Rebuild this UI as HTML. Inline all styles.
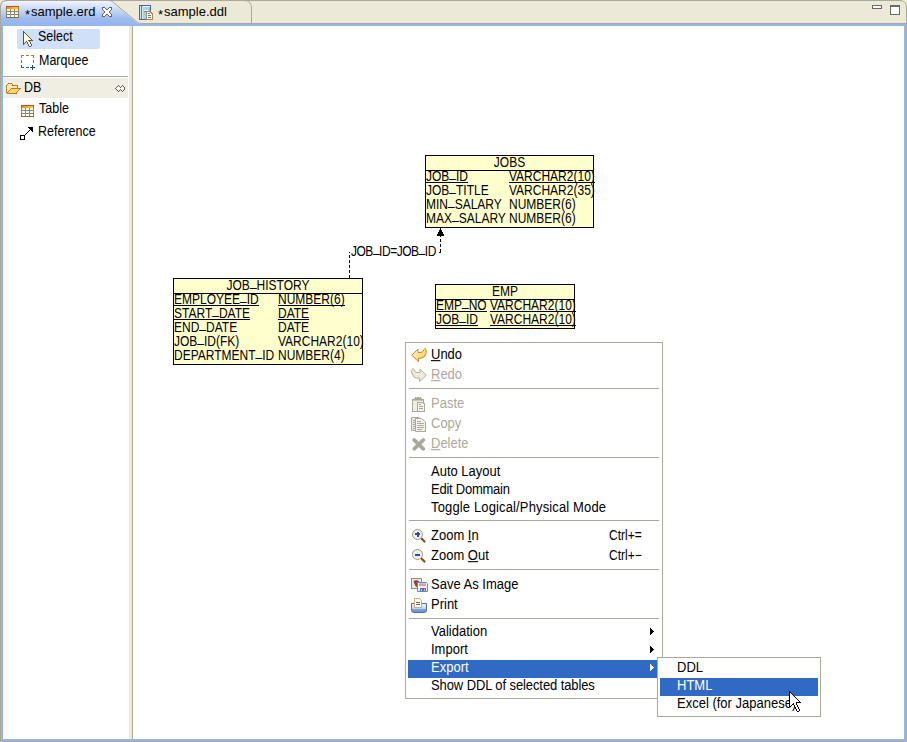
<!DOCTYPE html>
<html><head><meta charset="utf-8">
<style>
*{margin:0;padding:0;box-sizing:border-box}
html,body{width:907px;height:742px;overflow:hidden;background:#ECE9D8;font-family:"Liberation Sans",sans-serif;color:#000}
.a{position:absolute}
.t{position:absolute;white-space:pre;line-height:1;font-family:"Liberation Sans",sans-serif}
.f13{font-size:13px}
.f12{font-size:12px}
.tb{font-size:13px;letter-spacing:-0.62px}
svg{position:absolute;shape-rendering:crispEdges;overflow:visible}
.gray{color:#ACA899}
.u{text-decoration:underline}
.us{position:relative;top:-3px}
.sy13{transform:scaleY(1.1);transform-origin:0 11px}
.sy12i{display:inline-block;transform:scaleY(1.2);transform-origin:0 10px}
.ul::after{content:"";position:absolute;left:0;right:0;top:11px;height:1px;background:#000}
.sy125{transform:scaleY(1.15);transform-origin:0 10.5px}
</style></head><body>
<!-- outer frame -->
<div class="a" style="left:0;top:0;width:907px;height:742px;border:1px solid #ACA899;border-top-right-radius:7px;border-top-left-radius:7px;background:#ECE9D8"></div>
<!-- blue frame -->
<div class="a" style="left:1px;top:24px;width:905px;height:717px;border:2px solid #92B4EF;background:#FFFFFF"></div>
<!-- tab gray bottom line -->
<div class="a" style="left:142px;top:23px;width:764px;height:1px;background:#ACA899"></div>

<!-- active tab -->
<svg style="left:0;top:0" width="160" height="26">
  <defs><linearGradient id="tg" x1="0" y1="0" x2="0" y2="1">
    <stop offset="0" stop-color="#F2F6FD"/><stop offset="0.12" stop-color="#E2EBFA"/><stop offset="0.72" stop-color="#9DBBEE"/><stop offset="1" stop-color="#92B4EF"/></linearGradient></defs>
  <path shape-rendering="geometricPrecision" d="M1 26 L1 7 Q1 1 7 1 L107 1 C111 1 112 1.5 114 3.5 L135.5 21.5 C137.5 23.5 139 24 144 24 L144 26 Z" fill="url(#tg)"/>
  <path shape-rendering="geometricPrecision" d="M0.5 24 L0.5 7 Q0.5 0.5 7 0.5" fill="none" stroke="#ACA899" stroke-width="1"/>
  <path shape-rendering="geometricPrecision" d="M107 0.5 C111 0.5 112 1 114 3 L136 21 C138 23 139 23.5 143 23.5" fill="none" stroke="#ACA899" stroke-width="1"/>
</svg>
<!-- second tab right edge -->
<svg style="left:0;top:0" width="260" height="26">
  <path shape-rendering="geometricPrecision" d="M245 0.5 Q251.5 1 251.5 8 L251.5 23" fill="none" stroke="#ACA899" stroke-width="1"/>
</svg>

<!-- tab table icon -->
<svg style="left:6px;top:6px" width="13" height="12" viewBox="0 0 13 12">
  <defs><linearGradient id="tb1" x1="0" y1="0" x2="0" y2="1"><stop offset="0" stop-color="#B0501A"/><stop offset="0.3" stop-color="#A08040"/><stop offset="0.6" stop-color="#8A8A70"/><stop offset="1" stop-color="#7A6A30"/></linearGradient>
  <linearGradient id="th1" x1="0" y1="0" x2="1" y2="0"><stop offset="0" stop-color="#F08A10"/><stop offset="1" stop-color="#FAD030"/></linearGradient></defs>
  <rect x="0" y="0" width="13" height="12" fill="url(#tb1)"/>
  <rect x="1" y="1" width="11" height="2" fill="url(#th1)"/>
  <rect x="4" y="8" width="1" height="3" fill="#8A92A0"/><rect x="8" y="8" width="1" height="3" fill="#8A92A0"/>
  <rect x="1" y="3" width="3" height="2" fill="#E4F6FC"/><rect x="5" y="3" width="3" height="2" fill="#E4F6FC"/><rect x="9" y="3" width="3" height="2" fill="#E4F6FC"/>
  <rect x="1" y="6" width="3" height="2" fill="#F4FAFD"/><rect x="5" y="6" width="3" height="2" fill="#F4FAFD"/><rect x="9" y="6" width="3" height="2" fill="#F4FAFD"/>
  <rect x="1" y="9" width="3" height="2" fill="#FFFFFF"/><rect x="5" y="9" width="3" height="2" fill="#FFFFFF"/><rect x="9" y="9" width="3" height="2" fill="#FFFFFF"/>
</svg>
<div class="t f13" style="left:25px;top:5px"><span style="position:relative;top:3px;margin-right:1px">*</span>sample.erd</div>
<!-- close X -->
<svg style="left:102px;top:7px" width="10" height="10" viewBox="0 0 10 10"><rect x="0" y="0" width="3" height="1" fill="#6A6452"/><rect x="7" y="0" width="3" height="1" fill="#6A6452"/><rect x="0" y="1" width="1" height="1" fill="#6A6452"/><rect x="1" y="1" width="2" height="1" fill="#FFFFFF"/><rect x="3" y="1" width="1" height="1" fill="#6A6452"/><rect x="6" y="1" width="1" height="1" fill="#6A6452"/><rect x="7" y="1" width="2" height="1" fill="#FFFFFF"/><rect x="9" y="1" width="1" height="1" fill="#6A6452"/><rect x="0" y="2" width="1" height="1" fill="#6A6452"/><rect x="1" y="2" width="3" height="1" fill="#FFFFFF"/><rect x="4" y="2" width="2" height="1" fill="#6A6452"/><rect x="6" y="2" width="3" height="1" fill="#FFFFFF"/><rect x="9" y="2" width="1" height="1" fill="#6A6452"/><rect x="1" y="3" width="1" height="1" fill="#6A6452"/><rect x="2" y="3" width="6" height="1" fill="#FFFFFF"/><rect x="8" y="3" width="1" height="1" fill="#6A6452"/><rect x="2" y="4" width="1" height="1" fill="#6A6452"/><rect x="3" y="4" width="4" height="1" fill="#FFFFFF"/><rect x="7" y="4" width="1" height="1" fill="#6A6452"/><rect x="2" y="5" width="1" height="1" fill="#6A6452"/><rect x="3" y="5" width="4" height="1" fill="#FFFFFF"/><rect x="7" y="5" width="1" height="1" fill="#6A6452"/><rect x="1" y="6" width="1" height="1" fill="#6A6452"/><rect x="2" y="6" width="6" height="1" fill="#FFFFFF"/><rect x="8" y="6" width="1" height="1" fill="#6A6452"/><rect x="0" y="7" width="1" height="1" fill="#6A6452"/><rect x="1" y="7" width="3" height="1" fill="#FFFFFF"/><rect x="4" y="7" width="2" height="1" fill="#6A6452"/><rect x="6" y="7" width="3" height="1" fill="#FFFFFF"/><rect x="9" y="7" width="1" height="1" fill="#6A6452"/><rect x="0" y="8" width="1" height="1" fill="#6A6452"/><rect x="1" y="8" width="2" height="1" fill="#FFFFFF"/><rect x="3" y="8" width="1" height="1" fill="#6A6452"/><rect x="6" y="8" width="1" height="1" fill="#6A6452"/><rect x="7" y="8" width="2" height="1" fill="#FFFFFF"/><rect x="9" y="8" width="1" height="1" fill="#6A6452"/><rect x="0" y="9" width="3" height="1" fill="#6A6452"/><rect x="7" y="9" width="3" height="1" fill="#6A6452"/></svg>
<!-- ddl icon -->
<svg style="left:139px;top:5px" width="15" height="15" viewBox="0 0 15 15">
  <rect x="0" y="0" width="12" height="15" rx="1" fill="#3A64B0"/>
  <rect x="1" y="1" width="10" height="13" fill="#A8CFF4"/>
  <rect x="1" y="1" width="1" height="13" fill="#CFE8FA"/>
  <rect x="2" y="1" width="1" height="13" fill="#4C7CC0"/>
  <rect x="3" y="2" width="1" height="12" fill="#D8F0D8"/>
  <rect x="4" y="1" width="7" height="1" fill="#FFFFFF"/>
  <rect x="10" y="2" width="1" height="12" fill="#80C8D8"/>
  <rect x="5" y="5" width="4" height="1" fill="#FFFFFF"/>
  <rect x="5" y="6" width="3" height="1" fill="#3C88C0"/>
  <path d="M7 6 H11 L14 9 V15 H7 Z" fill="#A88A40"/>
  <path d="M8 7 H10.5 L13 9.5 V14 H8 Z" fill="#F6F8FC"/>
  <rect x="9" y="8" width="2" height="1" fill="#5A78B8"/><rect x="9" y="10" width="3" height="1" fill="#5A78B8"/><rect x="9" y="12" width="3" height="1" fill="#5A78B8"/>
</svg>
<div class="t f13" style="left:158px;top:5px"><span style="position:relative;top:3px;margin-right:1px">*</span>sample.ddl</div>

<!-- min / max -->
<svg style="left:872px;top:5px" width="30" height="12" viewBox="0 0 30 12">
  <rect x="0.5" y="0.5" width="9" height="3" fill="#FFFFFF" stroke="#6F6A5E"/>
  <rect x="18.5" y="0.5" width="9" height="9" fill="#FFFFFF" stroke="#6F6A5E"/>
  <rect x="18" y="1" width="10" height="1" fill="#6F6A5E"/>
</svg>

<!-- palette / canvas separator -->
<div class="a" style="left:129px;top:26px;width:3px;height:713px;background:#ECE9D8"></div>
<div class="a" style="left:132px;top:26px;width:1px;height:713px;background:#ACA899"></div>


<!-- palette -->
<div class="a" style="left:17px;top:29px;width:83px;height:20px;background:#CFE0F8;border-radius:2px"></div>
<svg style="left:23px;top:31px" width="10" height="16" viewBox="0 0 10 16"><rect x="0" y="0" width="1" height="1" fill="#57524A"/><rect x="0" y="1" width="2" height="1" fill="#57524A"/><rect x="0" y="2" width="1" height="1" fill="#57524A"/><rect x="1" y="2" width="1" height="1" fill="#FFFCD8"/><rect x="2" y="2" width="1" height="1" fill="#57524A"/><rect x="0" y="3" width="1" height="1" fill="#57524A"/><rect x="1" y="3" width="2" height="1" fill="#FFFCD8"/><rect x="3" y="3" width="1" height="1" fill="#57524A"/><rect x="0" y="4" width="1" height="1" fill="#57524A"/><rect x="1" y="4" width="3" height="1" fill="#FFFCD8"/><rect x="4" y="4" width="1" height="1" fill="#57524A"/><rect x="0" y="5" width="1" height="1" fill="#57524A"/><rect x="1" y="5" width="4" height="1" fill="#FFFCD8"/><rect x="5" y="5" width="1" height="1" fill="#57524A"/><rect x="0" y="6" width="1" height="1" fill="#57524A"/><rect x="1" y="6" width="5" height="1" fill="#FFFCD8"/><rect x="6" y="6" width="1" height="1" fill="#57524A"/><rect x="0" y="7" width="1" height="1" fill="#57524A"/><rect x="1" y="7" width="6" height="1" fill="#FFFCD8"/><rect x="7" y="7" width="1" height="1" fill="#57524A"/><rect x="0" y="8" width="1" height="1" fill="#57524A"/><rect x="1" y="8" width="7" height="1" fill="#FFFCD8"/><rect x="8" y="8" width="1" height="1" fill="#57524A"/><rect x="0" y="9" width="1" height="1" fill="#57524A"/><rect x="1" y="9" width="4" height="1" fill="#FFFCD8"/><rect x="5" y="9" width="5" height="1" fill="#57524A"/><rect x="0" y="10" width="1" height="1" fill="#57524A"/><rect x="1" y="10" width="2" height="1" fill="#FFFCD8"/><rect x="3" y="10" width="1" height="1" fill="#57524A"/><rect x="4" y="10" width="2" height="1" fill="#FFFCD8"/><rect x="6" y="10" width="1" height="1" fill="#57524A"/><rect x="0" y="11" width="1" height="1" fill="#57524A"/><rect x="1" y="11" width="1" height="1" fill="#FFFCD8"/><rect x="2" y="11" width="1" height="1" fill="#57524A"/><rect x="4" y="11" width="1" height="1" fill="#57524A"/><rect x="5" y="11" width="2" height="1" fill="#FFFCD8"/><rect x="7" y="11" width="1" height="1" fill="#57524A"/><rect x="0" y="12" width="2" height="1" fill="#57524A"/><rect x="4" y="12" width="1" height="1" fill="#57524A"/><rect x="5" y="12" width="2" height="1" fill="#FFFCD8"/><rect x="7" y="12" width="1" height="1" fill="#57524A"/><rect x="0" y="13" width="1" height="1" fill="#57524A"/><rect x="5" y="13" width="1" height="1" fill="#57524A"/><rect x="6" y="13" width="2" height="1" fill="#FFFCD8"/><rect x="8" y="13" width="1" height="1" fill="#57524A"/><rect x="5" y="14" width="1" height="1" fill="#57524A"/><rect x="6" y="14" width="2" height="1" fill="#FFFCD8"/><rect x="8" y="14" width="1" height="1" fill="#57524A"/><rect x="6" y="15" width="2" height="1" fill="#57524A"/></svg>
<div class="t sy125" style="font-size:12.5px;left:38px;top:31px">Select</div>
<svg style="left:21px;top:55px" width="14" height="15" viewBox="0 0 14 15">
  <rect x="0" y="0" width="3" height="1" fill="#9C7F3C"/><rect x="5" y="0" width="3" height="1" fill="#9C7F3C"/><rect x="10" y="0" width="3" height="1" fill="#9C7F3C"/>
  <rect x="0" y="0" width="1" height="3" fill="#9C7F3C"/><rect x="12" y="0" width="1" height="3" fill="#9C7F3C"/>
  <rect x="0" y="5" width="1" height="3" fill="#6B7A6A"/><rect x="12" y="5" width="1" height="3" fill="#6B7A6A"/>
  <rect x="0" y="10" width="1" height="3" fill="#2A5AA8"/>
  <rect x="0" y="12" width="3" height="1" fill="#2A5AA8"/><rect x="5" y="12" width="3" height="1" fill="#2A5AA8"/>
  <rect x="9" y="12" width="5" height="1" fill="#1C3F8A"/><rect x="11" y="10" width="1" height="5" fill="#1C3F8A"/>
</svg>
<div class="t sy125" style="font-size:12.5px;left:39px;top:55px">Marquee</div>
<!-- drawer -->
<div class="a" style="left:3px;top:76px;width:125px;height:1px;background:#ACA899"></div>
<div class="a" style="left:3px;top:77px;width:125px;height:1px;background:#FFFFFF"></div>
<div class="a" style="left:3px;top:78px;width:125px;height:20px;background:#F0EEE3"></div>
<svg style="left:6px;top:83px" width="15" height="11" viewBox="0 0 15 11"><rect x="2" y="0" width="4" height="1" fill="#BF7A1E"/><rect x="1" y="1" width="1" height="1" fill="#BF7A1E"/><rect x="2" y="1" width="4" height="1" fill="#FFFFFF"/><rect x="6" y="1" width="1" height="1" fill="#BF7A1E"/><rect x="0" y="2" width="1" height="1" fill="#BF7A1E"/><rect x="1" y="2" width="5" height="1" fill="#FCEAB0"/><rect x="6" y="2" width="6" height="1" fill="#BF7A1E"/><rect x="0" y="3" width="1" height="1" fill="#BF7A1E"/><rect x="1" y="3" width="10" height="1" fill="#FCEAB0"/><rect x="11" y="3" width="1" height="1" fill="#BF7A1E"/><rect x="0" y="4" width="1" height="1" fill="#BF7A1E"/><rect x="1" y="4" width="10" height="1" fill="#FCEAB0"/><rect x="11" y="4" width="1" height="1" fill="#BF7A1E"/><rect x="0" y="5" width="1" height="1" fill="#BF7A1E"/><rect x="1" y="5" width="4" height="1" fill="#FCEAB0"/><rect x="5" y="5" width="10" height="1" fill="#BF7A1E"/><rect x="0" y="6" width="1" height="1" fill="#BF7A1E"/><rect x="1" y="6" width="3" height="1" fill="#FCEAB0"/><rect x="4" y="6" width="1" height="1" fill="#BF7A1E"/><rect x="5" y="6" width="8" height="1" fill="#F9D57A"/><rect x="13" y="6" width="1" height="1" fill="#BF7A1E"/><rect x="0" y="7" width="1" height="1" fill="#BF7A1E"/><rect x="1" y="7" width="2" height="1" fill="#FCEAB0"/><rect x="3" y="7" width="1" height="1" fill="#BF7A1E"/><rect x="4" y="7" width="8" height="1" fill="#F9D57A"/><rect x="12" y="7" width="1" height="1" fill="#BF7A1E"/><rect x="0" y="8" width="1" height="1" fill="#BF7A1E"/><rect x="1" y="8" width="1" height="1" fill="#FCEAB0"/><rect x="2" y="8" width="1" height="1" fill="#BF7A1E"/><rect x="3" y="8" width="8" height="1" fill="#F9D57A"/><rect x="11" y="8" width="1" height="1" fill="#BF7A1E"/><rect x="0" y="9" width="2" height="1" fill="#BF7A1E"/><rect x="2" y="9" width="8" height="1" fill="#F9D57A"/><rect x="10" y="9" width="1" height="1" fill="#BF7A1E"/><rect x="1" y="10" width="10" height="1" fill="#BF7A1E"/></svg>
<div class="t sy125" style="font-size:12.5px;left:24px;top:82px">DB</div>
<svg style="left:115px;top:85px" width="10" height="7" viewBox="0 0 10 7"><rect x="3" y="0" width="1" height="1" fill="#5E5A50"/><rect x="7" y="0" width="1" height="1" fill="#5E5A50"/><rect x="2" y="1" width="1" height="1" fill="#5E5A50"/><rect x="3" y="1" width="1" height="1" fill="#FFFFFF"/><rect x="4" y="1" width="1" height="1" fill="#5E5A50"/><rect x="6" y="1" width="1" height="1" fill="#5E5A50"/><rect x="7" y="1" width="1" height="1" fill="#FFFFFF"/><rect x="8" y="1" width="1" height="1" fill="#5E5A50"/><rect x="1" y="2" width="1" height="1" fill="#5E5A50"/><rect x="2" y="2" width="3" height="1" fill="#FFFFFF"/><rect x="5" y="2" width="1" height="1" fill="#5E5A50"/><rect x="6" y="2" width="3" height="1" fill="#FFFFFF"/><rect x="9" y="2" width="1" height="1" fill="#5E5A50"/><rect x="0" y="3" width="1" height="1" fill="#5E5A50"/><rect x="1" y="3" width="8" height="1" fill="#FFFFFF"/><rect x="9" y="3" width="1" height="1" fill="#5E5A50"/><rect x="1" y="4" width="1" height="1" fill="#5E5A50"/><rect x="2" y="4" width="3" height="1" fill="#FFFFFF"/><rect x="5" y="4" width="1" height="1" fill="#5E5A50"/><rect x="6" y="4" width="3" height="1" fill="#FFFFFF"/><rect x="9" y="4" width="1" height="1" fill="#5E5A50"/><rect x="2" y="5" width="1" height="1" fill="#5E5A50"/><rect x="3" y="5" width="1" height="1" fill="#FFFFFF"/><rect x="4" y="5" width="1" height="1" fill="#5E5A50"/><rect x="6" y="5" width="1" height="1" fill="#5E5A50"/><rect x="7" y="5" width="1" height="1" fill="#FFFFFF"/><rect x="8" y="5" width="1" height="1" fill="#5E5A50"/><rect x="3" y="6" width="1" height="1" fill="#5E5A50"/><rect x="7" y="6" width="1" height="1" fill="#5E5A50"/></svg>
<svg style="left:21px;top:105px" width="13" height="12" viewBox="0 0 13 12">
  <defs><linearGradient id="tb2" x1="0" y1="0" x2="0" y2="1"><stop offset="0" stop-color="#B0501A"/><stop offset="0.3" stop-color="#A08040"/><stop offset="0.6" stop-color="#8A8A70"/><stop offset="1" stop-color="#7A6A30"/></linearGradient>
  <linearGradient id="th2" x1="0" y1="0" x2="1" y2="0"><stop offset="0" stop-color="#F08A10"/><stop offset="1" stop-color="#FAD030"/></linearGradient></defs>
  <rect x="0" y="0" width="13" height="12" fill="url(#tb2)"/>
  <rect x="1" y="1" width="11" height="2" fill="url(#th2)"/>
  <rect x="4" y="8" width="1" height="3" fill="#8A92A0"/><rect x="8" y="8" width="1" height="3" fill="#8A92A0"/>
  <rect x="1" y="3" width="3" height="2" fill="#E4F6FC"/><rect x="5" y="3" width="3" height="2" fill="#E4F6FC"/><rect x="9" y="3" width="3" height="2" fill="#E4F6FC"/>
  <rect x="1" y="6" width="3" height="2" fill="#F4FAFD"/><rect x="5" y="6" width="3" height="2" fill="#F4FAFD"/><rect x="9" y="6" width="3" height="2" fill="#F4FAFD"/>
  <rect x="1" y="9" width="3" height="2" fill="#FFFFFF"/><rect x="5" y="9" width="3" height="2" fill="#FFFFFF"/><rect x="9" y="9" width="3" height="2" fill="#FFFFFF"/>
</svg>
<div class="t sy125" style="font-size:12.5px;left:39px;top:103px">Table</div>
<svg style="left:20px;top:127px" width="13" height="13" viewBox="0 0 13 13"><rect x="1" y="9" width="3" height="3" fill="#FFFFFF"/><rect x="8" y="0" width="5" height="1" fill="#000"/><rect x="9" y="1" width="4" height="1" fill="#000"/><rect x="10" y="2" width="3" height="1" fill="#000"/><rect x="9" y="3" width="1" height="1" fill="#000"/><rect x="11" y="3" width="2" height="1" fill="#000"/><rect x="8" y="4" width="1" height="1" fill="#000"/><rect x="12" y="4" width="1" height="1" fill="#000"/><rect x="7" y="5" width="1" height="1" fill="#000"/><rect x="6" y="6" width="1" height="1" fill="#000"/><rect x="5" y="7" width="1" height="1" fill="#000"/><rect x="0" y="8" width="5" height="1" fill="#000"/><rect x="0" y="9" width="1" height="1" fill="#000"/><rect x="4" y="9" width="1" height="1" fill="#000"/><rect x="0" y="10" width="1" height="1" fill="#000"/><rect x="4" y="10" width="1" height="1" fill="#000"/><rect x="0" y="11" width="1" height="1" fill="#000"/><rect x="4" y="11" width="1" height="1" fill="#000"/><rect x="0" y="12" width="5" height="1" fill="#000"/></svg>
<div class="t sy125" style="font-size:12.5px;left:38px;top:126px">Reference</div>

<!-- tables -->
<div class="a" style="left:425px;top:155px;width:169px;height:73px;border:1px solid #000;background:#FFFFCE"></div>
<div class="a" style="left:425px;top:170px;width:169px;height:1px;background:#000"></div>
<div class="t f12" style="left:425px;width:169px;text-align:center;top:157px"><span class="sy12i">JOBS</span></div>
<div class="t f12 ul" style="left:426px;top:171px"><span class="sy12i">JOB<span class="us">_</span>ID</span></div>
<div class="t f12 ul" style="left:509px;top:171px"><span class="sy12i">VARCHAR2(10)</span></div>
<div class="t f12" style="left:426px;top:185px"><span class="sy12i">JOB<span class="us">_</span>TITLE</span></div>
<div class="t f12" style="left:509px;top:185px"><span class="sy12i">VARCHAR2(35)</span></div>
<div class="t f12" style="left:426px;top:199px"><span class="sy12i">MIN<span class="us">_</span>SALARY</span></div>
<div class="t f12" style="left:509px;top:199px"><span class="sy12i">NUMBER(6)</span></div>
<div class="t f12" style="left:426px;top:213px"><span class="sy12i">MAX<span class="us">_</span>SALARY</span></div>
<div class="t f12" style="left:509px;top:213px"><span class="sy12i">NUMBER(6)</span></div>
<div class="a" style="left:173px;top:278px;width:190px;height:87px;border:1px solid #000;background:#FFFFCE"></div>
<div class="a" style="left:173px;top:293px;width:190px;height:1px;background:#000"></div>
<div class="t f12" style="left:173px;width:190px;text-align:center;top:280px"><span class="sy12i">JOB<span class="us">_</span>HISTORY</span></div>
<div class="t f12 ul" style="left:174px;top:294px"><span class="sy12i">EMPLOYEE<span class="us">_</span>ID</span></div>
<div class="t f12 ul" style="left:278px;top:294px"><span class="sy12i">NUMBER(6)</span></div>
<div class="t f12 ul" style="left:174px;top:308px"><span class="sy12i">START<span class="us">_</span>DATE</span></div>
<div class="t f12 ul" style="left:278px;top:308px"><span class="sy12i">DATE</span></div>
<div class="t f12" style="left:174px;top:322px"><span class="sy12i">END<span class="us">_</span>DATE</span></div>
<div class="t f12" style="left:278px;top:322px"><span class="sy12i">DATE</span></div>
<div class="t f12" style="left:174px;top:336px"><span class="sy12i">JOB<span class="us">_</span>ID(FK)</span></div>
<div class="t f12" style="left:278px;top:336px"><span class="sy12i">VARCHAR2(10)</span></div>
<div class="t f12" style="left:174px;top:350px"><span class="sy12i">DEPARTMENT<span class="us">_</span>ID</span></div>
<div class="t f12" style="left:278px;top:350px"><span class="sy12i">NUMBER(4)</span></div>
<div class="a" style="left:435px;top:284px;width:140px;height:45px;border:1px solid #000;background:#FFFFCE"></div>
<div class="a" style="left:435px;top:299px;width:140px;height:1px;background:#000"></div>
<div class="t f12" style="left:435px;width:140px;text-align:center;top:286px"><span class="sy12i">EMP</span></div>
<div class="t f12 ul" style="left:436px;top:300px"><span class="sy12i">EMP<span class="us">_</span>NO</span></div>
<div class="t f12 ul" style="left:490px;top:300px"><span class="sy12i">VARCHAR2(10)</span></div>
<div class="t f12 ul" style="left:436px;top:314px"><span class="sy12i">JOB<span class="us">_</span>ID</span></div>
<div class="t f12 ul" style="left:490px;top:314px"><span class="sy12i">VARCHAR2(10)</span></div>
<svg style="left:340px;top:225px" width="110" height="56" viewBox="0 0 110 56">
  <path d="M9.5 53 V27.5" fill="none" stroke="#000" stroke-width="1" stroke-dasharray="3 2"/>
  <path d="M9 27.5 H101" fill="none" stroke="#000" stroke-width="1" stroke-dasharray="3 2"/>
  <path d="M100.5 27 V11" fill="none" stroke="#000" stroke-width="1" stroke-dasharray="3 2"/>
  <path d="M100 3 H101 V5 H102 V7 H103 V9 H104 V11 H97 V9 H98 V7 H99 V5 H100 Z" fill="#000"/>
</svg>
<div class="t" style="font-size:12px;letter-spacing:-0.48px;left:350px;top:246px;background:#FFFFFF;padding:0 1px"><span class="sy12i">JOB<span class="us">_</span>ID=JOB<span class="us">_</span>ID</span></div>


<!-- context menu -->
<div class="a" style="left:405px;top:342px;width:258px;height:357px;border:1px solid #ACA899;background:#FFFFFF"></div>
<div class="a" style="left:409px;top:388px;width:250px;height:1px;background:#ACA899"></div>
<div class="a" style="left:409px;top:457px;width:250px;height:1px;background:#ACA899"></div>
<div class="a" style="left:409px;top:520px;width:250px;height:1px;background:#ACA899"></div>
<div class="a" style="left:409px;top:569px;width:250px;height:1px;background:#ACA899"></div>
<div class="a" style="left:409px;top:618px;width:250px;height:1px;background:#ACA899"></div>
<div class="a" style="left:408px;top:660px;width:252px;height:18px;background:#316AC5"></div>

<div class="t f13 sy13" style="left:431px;top:348px"><span class="u">U</span>ndo</div>
<div class="t f13 gray sy13" style="left:431px;top:368px"><span class="u">R</span>edo</div>
<div class="t f13 gray sy13" style="left:431px;top:397px">Paste</div>
<div class="t f13 gray sy13" style="left:431px;top:417px">Copy</div>
<div class="t f13 gray sy13" style="left:431px;top:437px"><span class="u">D</span>elete</div>
<div class="t f13 sy13" style="left:431px;top:465px">Auto Layout</div>
<div class="t f13 sy13" style="left:431px;top:483px;letter-spacing:-0.25px">Edit Dommain</div>
<div class="t f13 sy13" style="left:431px;top:501px;letter-spacing:0.14px">Toggle Logical/Physical Mode</div>
<div class="t f13 sy13" style="left:431px;top:529px">Zoom <span class="u">I</span>n</div>
<div class="t f12" style="left:609px;top:530px"><span class="sy12i">Ctrl+=</span></div>
<div class="t f13 sy13" style="left:431px;top:549px">Zoom <span class="u">O</span>ut</div>
<div class="t f12" style="left:609px;top:550px"><span class="sy12i">Ctrl+&#8722;</span></div>
<div class="t f13 sy13" style="left:431px;top:578px">Save As Image</div>
<div class="t f13 sy13" style="left:431px;top:598px">Print</div>
<div class="t f13 sy13" style="left:431px;top:625px">Validation</div>
<div class="t f13 sy13" style="left:431px;top:643px">Import</div>
<div class="t f13 sy13" style="left:431px;top:661px;color:#FFFFFF">Export</div>
<div class="t f13 sy13" style="left:431px;top:679px;letter-spacing:-0.1px">Show DDL of selected tables</div>
<svg style="left:650px;top:628px" width="4" height="43" viewBox="0 0 4 43">
  <path d="M0 0 L1 0 L1 1 L2 1 L2 2 L3 2 L3 3 L4 3 L4 4 L3 4 L3 5 L2 5 L2 6 L1 6 L1 7 L0 7 Z" fill="#000"/>
  <path transform="translate(0,18)" d="M0 0 L1 0 L1 1 L2 1 L2 2 L3 2 L3 3 L4 3 L4 4 L3 4 L3 5 L2 5 L2 6 L1 6 L1 7 L0 7 Z" fill="#000"/>
  <path transform="translate(0,36)" d="M0 0 L1 0 L1 1 L2 1 L2 2 L3 2 L3 3 L4 3 L4 4 L3 4 L3 5 L2 5 L2 6 L1 6 L1 7 L0 7 Z" fill="#FFFFFF"/>
</svg>

<!-- menu icons -->
<svg style="left:411px;top:348px" width="16" height="15" viewBox="0 0 16 15">
  <defs><linearGradient id="ug" x1="0" y1="0" x2="1" y2="1"><stop offset="0" stop-color="#FFF8D8"/><stop offset="1" stop-color="#F0C858"/></linearGradient></defs>
  <path shape-rendering="geometricPrecision" d="M0.7 7.3 L7 1 V4.5 H10 Q12 4.5 13 1.5 Q13.5 0.3 14.5 0.8 Q15.8 1.8 15 5.5 Q14 9.8 10 10.2 H7.5 V13.6 Z" fill="url(#ug)" stroke="#D48A0C" stroke-width="1"/>
</svg>
<svg style="left:411px;top:368px" width="16" height="15" viewBox="0 0 16 15">
  <path shape-rendering="geometricPrecision" transform="translate(16,0) scale(-1,1)" d="M0.7 7.3 L7 1 V4.5 H10 Q12 4.5 13 1.5 Q13.5 0.3 14.5 0.8 Q15.8 1.8 15 5.5 Q14 9.8 10 10.2 H7.5 V13.6 Z" fill="#EEEBDC" stroke="#B5B09C" stroke-width="1"/>
</svg>
<svg style="left:412px;top:397px" width="13" height="15" viewBox="0 0 13 15">
  <rect x="0" y="2" width="12" height="13" fill="#ACA899"/>
  <rect x="1" y="4" width="10" height="10" fill="#F2F0E4"/>
  <rect x="1" y="3" width="10" height="1" fill="#C8C4B4"/>
  <rect x="3" y="0" width="6" height="2" fill="#ACA899"/>
  <rect x="4" y="0" width="1" height="1" fill="#E8E6DA"/><rect x="7" y="0" width="1" height="1" fill="#E8E6DA"/>
  <rect x="2" y="1" width="1" height="1" fill="#C8C4B4"/><rect x="9" y="1" width="1" height="1" fill="#C8C4B4"/>
  <path d="M5 5 H11 L13 7 V15 H5 Z" fill="#ACA899"/>
  <path d="M6 6 H10.5 L12 7.5 V14 H6 Z" fill="#F6F4EA"/>
  <rect x="7" y="7" width="2" height="1" fill="#ACA899"/><rect x="7" y="9" width="4" height="1" fill="#ACA899"/><rect x="7" y="11" width="4" height="1" fill="#ACA899"/>
</svg>
<svg style="left:411px;top:417px" width="15" height="15" viewBox="0 0 15 15">
  <path shape-rendering="geometricPrecision" d="M0.5 0.5 H8 L9.5 2 V13.5 H0.5 Z" fill="#EEEBDC" stroke="#ACA899"/>
  <rect x="2" y="3" width="2" height="1" fill="#ACA899"/><rect x="2" y="5" width="2" height="1" fill="#ACA899"/><rect x="2" y="7" width="2" height="1" fill="#ACA899"/><rect x="2" y="9" width="2" height="1" fill="#ACA899"/><rect x="2" y="11" width="2" height="1" fill="#ACA899"/>
  <path shape-rendering="geometricPrecision" d="M4.5 1.5 H10.5 L14.5 5 V14.5 H4.5 Z" fill="#F6F4EA" stroke="#ACA899"/>
  <rect x="6" y="4" width="4" height="1" fill="#ACA899"/><rect x="6" y="6" width="7" height="1" fill="#ACA899"/><rect x="6" y="8" width="7" height="1" fill="#ACA899"/><rect x="6" y="10" width="7" height="1" fill="#ACA899"/><rect x="6" y="12" width="5" height="1" fill="#ACA899"/>
</svg>
<svg style="left:412px;top:438px" width="14" height="13" viewBox="0 0 14 13">
  <path shape-rendering="geometricPrecision" d="M2.2 2 L11.3 10.8 M11.3 2 L2.2 10.8" stroke="#ACA899" stroke-width="3.8" stroke-linecap="round"/>
</svg>
<svg style="left:412px;top:529px" width="15" height="14" viewBox="0 0 15 14">
  <path shape-rendering="geometricPrecision" d="M9 9 L12.5 12.5" stroke="#8B4A20" stroke-width="2.2" stroke-linecap="round"/>
  <circle shape-rendering="geometricPrecision" cx="5.5" cy="5.5" r="5" fill="#EEF0F6" stroke="#A89868" stroke-width="1"/>
  <path d="M3 4 H8 V6 H3 Z M4.5 2.5 H6.5 V7.5 H4.5 Z" fill="#2A48C8"/>
</svg>
<svg style="left:412px;top:549px" width="15" height="14" viewBox="0 0 15 14">
  <path shape-rendering="geometricPrecision" d="M9 9 L12.5 12.5" stroke="#8B4A20" stroke-width="2.2" stroke-linecap="round"/>
  <circle shape-rendering="geometricPrecision" cx="5.5" cy="5.5" r="5" fill="#EEF0F6" stroke="#A89868" stroke-width="1"/>
  <path d="M3 4.5 H8 V6.5 H3 Z" fill="#2A48C8"/>
</svg>
<svg style="left:411px;top:578px" width="17" height="15" viewBox="0 0 17 15">
  <rect x="0" y="0" width="11" height="11" fill="#A08C58"/>
  <rect x="1" y="1" width="9" height="9" fill="#DCEEFA"/>
  <path shape-rendering="geometricPrecision" d="M2.5 3 Q5 1.5 8 3 L7 8.5 L5 9 L3.5 6 Z" fill="#A83A2A"/>
  <path shape-rendering="geometricPrecision" d="M5 3 Q7 2.5 8.5 4 L6 4.5 Z" fill="#3A5AA8"/>
  <path shape-rendering="geometricPrecision" d="M6.5 4.5 H15.5 L16.5 5.5 V13.5 H6.5 Z" fill="#EEF2FA" stroke="#6A88C0" stroke-width="1"/>
  <rect x="8" y="5" width="7" height="1" fill="#B8C8E8"/>
  <rect x="8" y="6" width="7" height="2" fill="#EC9C8C"/>
  <rect x="9" y="10" width="6" height="3" fill="#4A74C0"/>
  <rect x="10" y="11" width="1" height="2" fill="#F8B090"/><rect x="13" y="11" width="1" height="2" fill="#F8B090"/>
</svg>
<svg style="left:411px;top:598px" width="16" height="15" viewBox="0 0 16 15">
  <defs><linearGradient id="pg" x1="0" y1="0" x2="0" y2="1"><stop offset="0" stop-color="#F0F4FA"/><stop offset="0.55" stop-color="#C8D6EE"/><stop offset="0.6" stop-color="#8AA6DA"/><stop offset="1" stop-color="#6A8CCC"/></linearGradient></defs>
  <path shape-rendering="geometricPrecision" d="M0.5 5.5 H15.5 V12 Q15.5 14.5 13 14.5 H3 Q0.5 14.5 0.5 12 Z" fill="url(#pg)" stroke="#4A70B8" stroke-width="1"/>
  <path shape-rendering="geometricPrecision" d="M3.5 0.5 H8.5 L10.5 2.5 V9.5 H3.5 Z" fill="#FBFAF2" stroke="#C8B070" stroke-width="1"/>
  <rect x="5" y="4" width="4" height="1" fill="#4A6AA0"/><rect x="5" y="6" width="4" height="1" fill="#4A6AA0"/>
</svg>

<!-- submenu -->
<div class="a" style="left:657px;top:657px;width:164px;height:60px;border:1px solid #ACA899;background:#FFFFFF"></div>
<div class="a" style="left:660px;top:678px;width:158px;height:18px;background:#316AC5"></div>
<div class="t f13 sy13" style="left:677px;top:661px">DDL</div>
<div class="t f13 sy13" style="left:677px;top:679px;color:#FFFFFF">HTML</div>
<div class="t f13 sy13" style="left:677px;top:697px">Excel (for Japanese)</div>

<!-- mouse cursor -->
<svg style="left:789px;top:691px" width="12" height="21" viewBox="0 0 12 21"><rect x="0" y="0" width="1" height="1" fill="#000"/><rect x="0" y="1" width="2" height="1" fill="#000"/><rect x="0" y="2" width="1" height="1" fill="#000"/><rect x="1" y="2" width="1" height="1" fill="#FFF"/><rect x="2" y="2" width="1" height="1" fill="#000"/><rect x="0" y="3" width="1" height="1" fill="#000"/><rect x="1" y="3" width="2" height="1" fill="#FFF"/><rect x="3" y="3" width="1" height="1" fill="#000"/><rect x="0" y="4" width="1" height="1" fill="#000"/><rect x="1" y="4" width="3" height="1" fill="#FFF"/><rect x="4" y="4" width="1" height="1" fill="#000"/><rect x="0" y="5" width="1" height="1" fill="#000"/><rect x="1" y="5" width="4" height="1" fill="#FFF"/><rect x="5" y="5" width="1" height="1" fill="#000"/><rect x="0" y="6" width="1" height="1" fill="#000"/><rect x="1" y="6" width="5" height="1" fill="#FFF"/><rect x="6" y="6" width="1" height="1" fill="#000"/><rect x="0" y="7" width="1" height="1" fill="#000"/><rect x="1" y="7" width="6" height="1" fill="#FFF"/><rect x="7" y="7" width="1" height="1" fill="#000"/><rect x="0" y="8" width="1" height="1" fill="#000"/><rect x="1" y="8" width="7" height="1" fill="#FFF"/><rect x="8" y="8" width="1" height="1" fill="#000"/><rect x="0" y="9" width="1" height="1" fill="#000"/><rect x="1" y="9" width="8" height="1" fill="#FFF"/><rect x="9" y="9" width="1" height="1" fill="#000"/><rect x="0" y="10" width="1" height="1" fill="#000"/><rect x="1" y="10" width="9" height="1" fill="#FFF"/><rect x="10" y="10" width="1" height="1" fill="#000"/><rect x="0" y="11" width="1" height="1" fill="#000"/><rect x="1" y="11" width="6" height="1" fill="#FFF"/><rect x="7" y="11" width="5" height="1" fill="#000"/><rect x="0" y="12" width="1" height="1" fill="#000"/><rect x="1" y="12" width="3" height="1" fill="#FFF"/><rect x="4" y="12" width="1" height="1" fill="#000"/><rect x="5" y="12" width="2" height="1" fill="#FFF"/><rect x="7" y="12" width="1" height="1" fill="#000"/><rect x="0" y="13" width="1" height="1" fill="#000"/><rect x="1" y="13" width="2" height="1" fill="#FFF"/><rect x="3" y="13" width="2" height="1" fill="#000"/><rect x="5" y="13" width="2" height="1" fill="#FFF"/><rect x="7" y="13" width="1" height="1" fill="#000"/><rect x="0" y="14" width="1" height="1" fill="#000"/><rect x="1" y="14" width="1" height="1" fill="#FFF"/><rect x="2" y="14" width="1" height="1" fill="#000"/><rect x="5" y="14" width="1" height="1" fill="#000"/><rect x="6" y="14" width="2" height="1" fill="#FFF"/><rect x="8" y="14" width="1" height="1" fill="#000"/><rect x="0" y="15" width="2" height="1" fill="#000"/><rect x="5" y="15" width="1" height="1" fill="#000"/><rect x="6" y="15" width="2" height="1" fill="#FFF"/><rect x="8" y="15" width="1" height="1" fill="#000"/><rect x="6" y="16" width="1" height="1" fill="#000"/><rect x="7" y="16" width="2" height="1" fill="#FFF"/><rect x="9" y="16" width="1" height="1" fill="#000"/><rect x="6" y="17" width="1" height="1" fill="#000"/><rect x="7" y="17" width="2" height="1" fill="#FFF"/><rect x="9" y="17" width="1" height="1" fill="#000"/><rect x="7" y="18" width="1" height="1" fill="#000"/><rect x="8" y="18" width="2" height="1" fill="#FFF"/><rect x="10" y="18" width="1" height="1" fill="#000"/><rect x="7" y="19" width="1" height="1" fill="#000"/><rect x="8" y="19" width="2" height="1" fill="#FFF"/><rect x="10" y="19" width="1" height="1" fill="#000"/><rect x="8" y="20" width="2" height="1" fill="#000"/></svg>

</body></html>
